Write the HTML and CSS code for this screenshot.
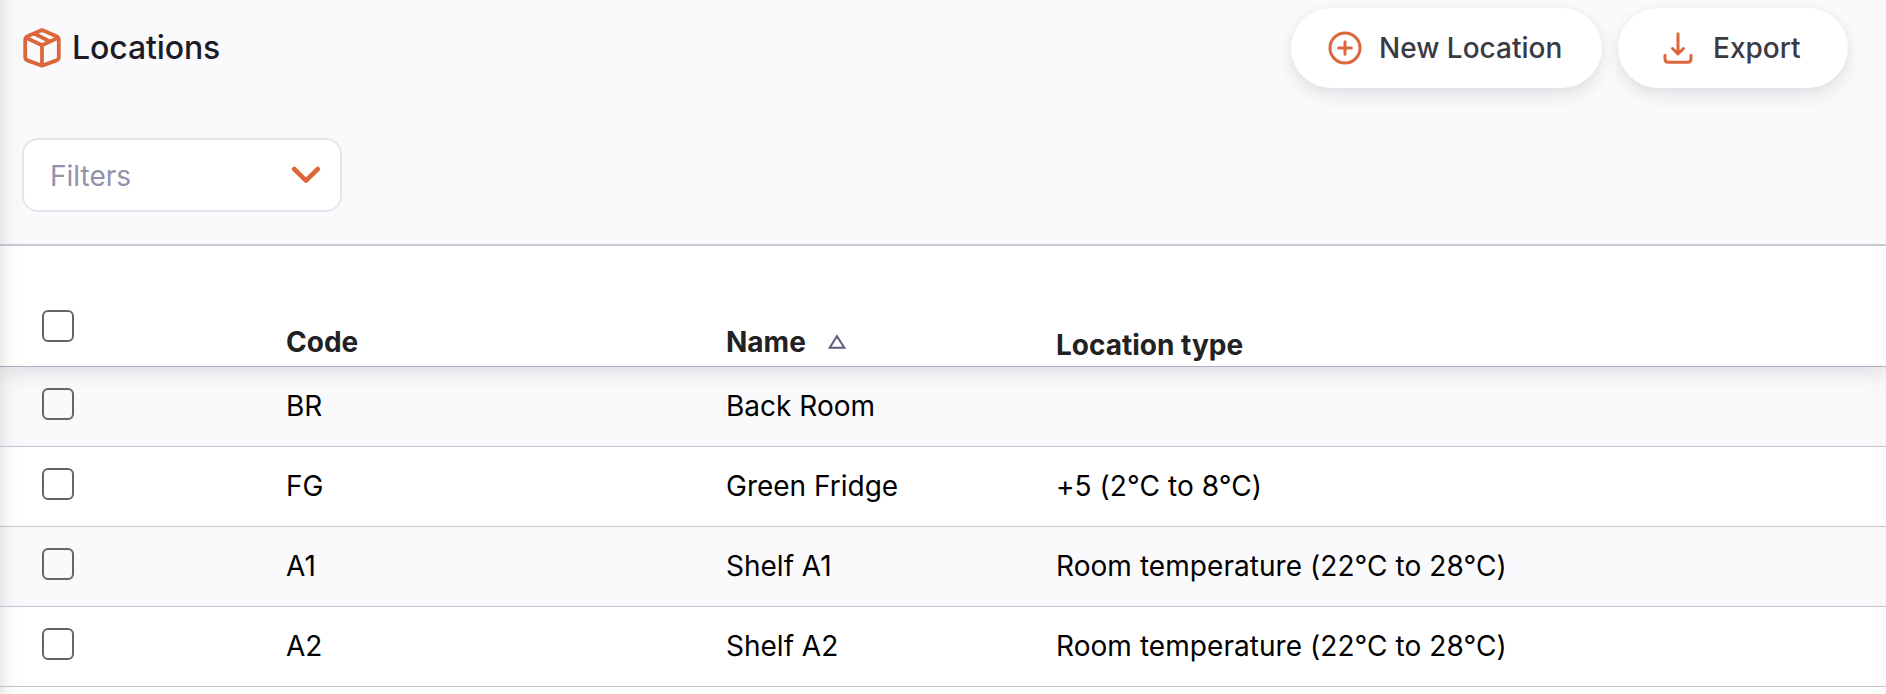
FILE: index.html
```html
<!DOCTYPE html>
<html lang="en">
<head>
<meta charset="utf-8">
<title>Locations</title>
<link rel="stylesheet" href="styles.css">
</head>
<body>
<main class="page">
  <header class="toolbar">
    <div class="toolbar-top">
      <h1 class="title">
        <svg class="box-icon" width="40" height="42" viewBox="0 0 40 42" fill="none" stroke="#dc673b" stroke-width="3.8" stroke-linejoin="round" stroke-linecap="round"><path d="M20 3 34.5 9.2Q36.800 10.300 36.800 13V30Q36.800 32.500 34.600 33.400L20 38.800 5.400 33.400Q3.200 32.500 3.200 30V13Q3.200 10.300 5.500 9.200Z"/><path d="M4.500 11 20 18.200 35.500 11M20 18.200V38M12.500 6.800 26.500 13.800"/></svg>
        <span class="title-text">Locations</span>
      </h1>
      <div class="actions">
        <button class="pill pill-new">
          <svg width="34" height="34" viewBox="0 0 34 34" fill="none" stroke="#dc673b" stroke-width="3" stroke-linecap="round"><circle cx="17" cy="17" r="15"/><path d="M17 10.700V23.300M10.700 17H23.300"/></svg>
          <span>New Location</span>
        </button>
        <button class="pill pill-export">
          <svg width="30" height="32" viewBox="0 0 30 32" fill="none" stroke="#dc673b" stroke-width="3" stroke-linecap="round" stroke-linejoin="round"><path d="M15 1.700V22M9.500 16.500 15 21.800 20.500 16.500M2 23.200V27Q2 30.200 5.200 30.200H24.800Q28 30.200 28 27V23.200"/></svg>
          <span>Export</span>
        </button>
      </div>
    </div>
    <div class="filter">
      <span>Filters</span>
      <svg width="30" height="20" viewBox="0 0 30 20" fill="none" stroke="#dc673b" stroke-width="4.600" stroke-linecap="round" stroke-linejoin="round"><path d="M3.200 3 15 14.600 26.800 3"/></svg>
    </div>
  </header>
  <section class="table">
    <div class="row head">
      <span class="check"></span>
      <span class="cell">Code</span>
      <span class="cell sorted">Name <svg width="18" height="16" viewBox="0 0 18 16" fill="none" stroke="#5c5c7b" stroke-width="2"><path d="M9 2.200 16.300 13.800H1.700Z"/></svg></span>
      <span class="cell type">Location type</span>
    </div>
    <div class="row"><span class="check"></span><span class="cell">BR</span><span class="cell">Back Room</span><span class="cell"></span></div>
    <div class="row"><span class="check"></span><span class="cell">FG</span><span class="cell">Green Fridge</span><span class="cell long">+5 (2°C to 8°C)</span></div>
    <div class="row"><span class="check"></span><span class="cell">A1</span><span class="cell">Shelf A1</span><span class="cell long">Room temperature (22°C to 28°C)</span></div>
    <div class="row"><span class="check"></span><span class="cell">A2</span><span class="cell">Shelf A2</span><span class="cell long">Room temperature (22°C to 28°C)</span></div>
  </section>
</main>
</body>
</html>
```
FILE: styles.css
```css
* { box-sizing: border-box; }
body {
  margin: 0;
  background: #fff;
  font: 400 28px/34px Inter, "Liberation Sans", sans-serif;
}
.page {
  position: relative;
  height: 694px;
  overflow: hidden;
}
/* Soft edge shading over the whole panel */
.page::after {
  content: "";
  position: absolute;
  inset: 0;
  z-index: 3;
  pointer-events: none;
  background:
    linear-gradient(90deg, rgba(0,0,0,.08) 0, rgba(0,0,0,.04) 6px, rgba(0,0,0,.016) 12px, rgba(0,0,0,.006) 19px, transparent 27px),
    linear-gradient(270deg, rgba(0,0,0,.008) 13px, transparent 13px);
}
.toolbar {
  position: relative;
  z-index: 2;
  height: 246px;
  padding: 8px 38px 0 22px;
  background: #fafafc;
  border-bottom: 2px solid #cacad2;
}
.toolbar-top {
  display: flex;
  justify-content: space-between;
  height: 130px;
}
.title {
  display: flex;
  gap: 10px;
  margin: 0;
  padding-top: 19px;
  font-size: 32px;
  font-weight: 500;
  line-height: 40px;
  letter-spacing: -.1px;
  color: #1c1c28;
}
.title-text { padding-top: 1px; }
.box-icon { display: block; }
.actions { display: flex; gap: 16px; }
.pill {
  display: flex;
  align-items: center;
  height: 80px;
  border: 0;
  border-radius: 40px;
  background: #fff;
  box-shadow: 0 8px 16px rgba(40,41,61,.1), 0 0 8px rgba(40,41,61,.04);
  color: #3a3a44;
  font: 500 28px/34px Inter, "Liberation Sans", sans-serif;
}
.pill-new { width: 311px; padding: 0 0 0 37px; gap: 17px; }
.pill-export { width: 230px; padding: 0 0 0 45px; gap: 20px; }
.filter {
  display: flex;
  justify-content: space-between;
  align-items: center;
  width: 320px;
  height: 74px;
  padding: 2px 19px 0 26px;
  border: 2px solid #e4e4eb;
  border-radius: 16px;
  background: #fff;
  color: #9292a9;
}
.row {
  display: grid;
  grid-template-columns: 244px 440px 330px 1fr;
  height: 80px;
  padding: 22px 0 0 42px;
  border-bottom: 1px solid #c7c7d1;
  background: #fff;
  color: #000;
}
.row:nth-child(even) { background: #fafafc; }
.check {
  width: 32px;
  height: 32px;
  margin-top: -1px;
  border: 2px solid #666;
  border-radius: 6px;
}
.long { letter-spacing: .06px; }
.head {
  position: relative;
  height: 121px;
  padding-top: 79px;
  border-bottom-color: #b0b0c0;
  box-shadow: 0 4px 20px rgba(40,41,61,.15);
  color: #222;
  font-weight: 700;
}
.head .check { margin-top: -15px; }
.sorted { display: flex; align-items: flex-start; gap: 22px; }
.sorted svg { margin-top: 9px; }
.type { padding-top: 3px; }
```
